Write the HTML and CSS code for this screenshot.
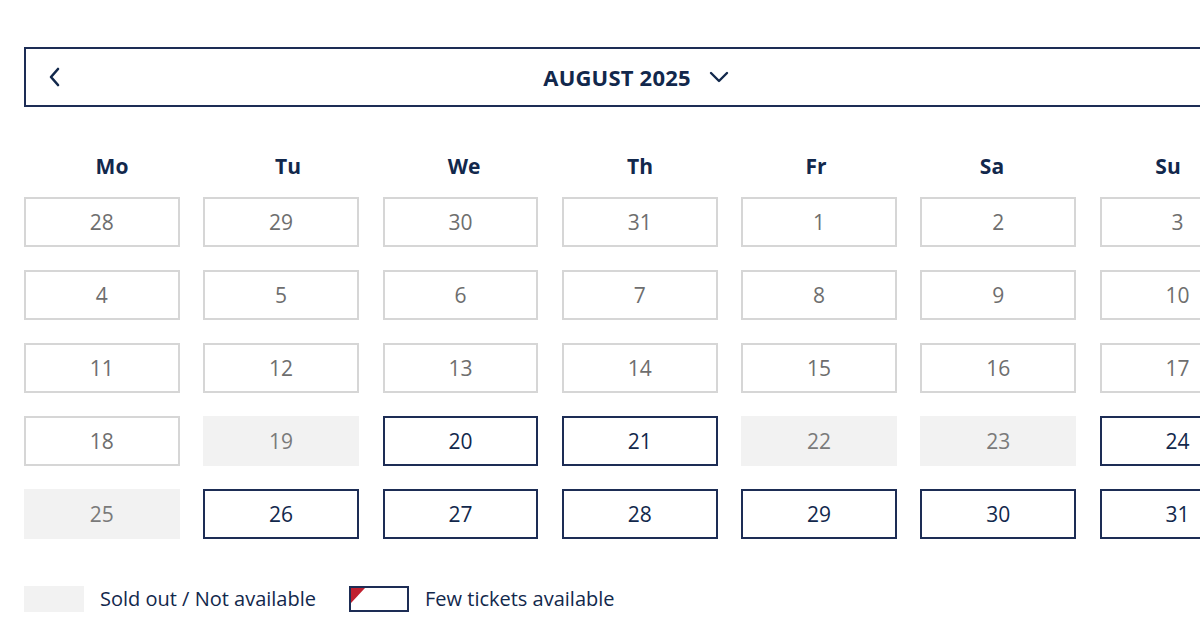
FILE: index.html
```html
<!DOCTYPE html>
<html lang="en">
<head>
    <meta charset="UTF-8">
    <meta name="viewport" content="width=device-width, initial-scale=1.0">
    <title>Ticket Calendar</title>
    <link rel="stylesheet" href="styles.css">
</head>
<body>
  <div class="calendar">
    <div class="month-bar">
      <button class="prev" aria-label="Previous month">
        <svg width="14" height="20" viewBox="0 0 14 20"><path d="M10 2 L3 10 L10 18" fill="none" stroke="#12284c" stroke-width="2.6" stroke-linecap="round" stroke-linejoin="round"/></svg>
      </button>
      <div class="month-title">
        AUGUST 2025
        <svg width="20" height="12" viewBox="0 0 20 12"><path d="M2 2 L10 10 L18 2" fill="none" stroke="#12284c" stroke-width="2.4" stroke-linecap="round" stroke-linejoin="round"/></svg>
      </div>
    </div>

    <div class="weekdays">
      <div class="wd">Mo</div>
      <div class="wd">Tu</div>
      <div class="wd">We</div>
      <div class="wd">Th</div>
      <div class="wd">Fr</div>
      <div class="wd">Sa</div>
      <div class="wd">Su</div>
    </div>

    <div class="grid">
      <div class="day past">28</div>
      <div class="day past">29</div>
      <div class="day past">30</div>
      <div class="day past">31</div>
      <div class="day past">1</div>
      <div class="day past">2</div>
      <div class="day past">3</div>

      <div class="day past">4</div>
      <div class="day past">5</div>
      <div class="day past">6</div>
      <div class="day past">7</div>
      <div class="day past">8</div>
      <div class="day past">9</div>
      <div class="day past">10</div>

      <div class="day past">11</div>
      <div class="day past">12</div>
      <div class="day past">13</div>
      <div class="day past">14</div>
      <div class="day past">15</div>
      <div class="day past">16</div>
      <div class="day past">17</div>

      <div class="day past">18</div>
      <div class="day soldout">19</div>
      <div class="day open">20</div>
      <div class="day open">21</div>
      <div class="day soldout">22</div>
      <div class="day soldout">23</div>
      <div class="day open">24</div>

      <div class="day soldout">25</div>
      <div class="day open">26</div>
      <div class="day open">27</div>
      <div class="day open">28</div>
      <div class="day open">29</div>
      <div class="day open">30</div>
      <div class="day open">31</div>
    </div>

    <div class="legend">
      <span class="swatch swatch-soldout"></span>
      <span class="legend-text">Sold out / Not available</span>
      <span class="swatch swatch-few"></span>
      <span class="legend-text">Few tickets available</span>
    </div>
  </div>
</body>
</html>
```

FILE: styles.css
```css
html, body{
    overflow: hidden;
}

body{
    margin: 0;
    padding: 47px 0 0 24px;
    background: #fff;
    font-family: "Open Sans", "Noto Sans", sans-serif;
    color: #12284c;
}

.calendar{
    width: 1232px;
}

.month-bar{
    position: relative;
    height: 56px;
    border: 2px solid #1d2d55;
    display: flex;
    align-items: center;
    justify-content: center;
}

.prev{
    position: absolute;
    left: 22px;
    top: 18px;
    background: none;
    border: none;
    padding: 0;
    cursor: pointer;
}

.month-title{
    display: flex;
    align-items: center;
    gap: 18px;
    font-size: 22px;
    font-weight: 700;
    letter-spacing: 0.2px;
    margin-left: -8px;
}

.weekdays{
    display: grid;
    grid-template-columns: repeat(7, 1fr);
    margin-top: 47px;
    margin-bottom: 19px;
}

.wd{
    text-align: center;
    font-size: 21px;
    font-weight: 700;
    height: 24px;
    line-height: 24px;
}

.grid{
    display: grid;
    grid-template-columns: repeat(7, 155.7px);
    column-gap: 23.6px;
    row-gap: 23px;
}

.day{
    height: 50px;
    box-sizing: border-box;
    display: flex;
    align-items: center;
    justify-content: center;
    font-size: 21px;
}

.past{
    border: 2px solid #d6d6d6;
    color: #6e6e6e;
}

.soldout{
    background: #f2f2f2;
    color: #7a7a7a;
}

.open{
    border: 2px solid #1d2d55;
    color: #12284c;
}

.legend{
    display: flex;
    align-items: center;
    margin-top: 46px;
    font-size: 20px;
}

.swatch{
    position: relative;
    width: 60px;
    height: 26px;
    box-sizing: border-box;
    flex-shrink: 0;
}

.swatch-soldout{
    background: #f2f2f2;
}

.swatch-few{
    border: 2px solid #1d2d55;
    background: #fff;
}

.swatch-few::before{
    content: "";
    position: absolute;
    left: 0;
    top: 0;
    border-top: 15px solid #c0202f;
    border-right: 14px solid transparent;
}

.legend-text{
    margin-left: 16px;
    margin-right: 33px;
}
```
